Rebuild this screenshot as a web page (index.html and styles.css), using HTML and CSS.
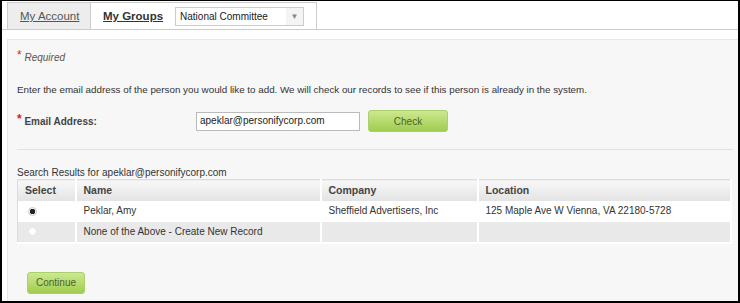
FILE: index.html
```html
<!DOCTYPE html>
<html>
<head>
<meta charset="utf-8">
<link rel="stylesheet" href="styles.css">
</head>
<body>
<div class="frame">
  <div class="tabs">
    <div class="tab tab-off"><a class="tab-link">My Account</a></div>
    <div class="tab tab-on">
      <a class="tab-link tab-link-on">My Groups</a>
      <div class="select"><span class="select-text">National Committee</span><span class="select-arrow">&#9660;</span></div>
    </div>
  </div>
  <div class="panel">
    <div class="required"><span class="star">*</span> Required</div>
    <p class="intro">Enter the email address of the person you would like to add. We will check our records to see if this person is already in the system.</p>
    <div class="email-row">
      <label class="email-label"><span class="star">*</span> Email Address:</label>
      <div class="input">apeklar@personifycorp.com</div>
      <button class="btn btn-check">Check</button>
    </div>
    <div class="sep"></div>
    <div class="results-title">Search Results for apeklar@personifycorp.com</div>
    <table class="results">
      <thead>
        <tr><th class="c-sel">Select</th><th class="c-name">Name</th><th class="c-comp">Company</th><th class="c-loc">Location</th></tr>
      </thead>
      <tbody>
        <tr class="row-a"><td class="c-sel"><span class="radio radio-on"></span></td><td>Peklar, Amy</td><td>Sheffield Advertisers, Inc</td><td>125 Maple Ave W Vienna, VA 22180-5728</td></tr>
        <tr class="row-b"><td class="c-sel"><span class="radio"></span></td><td>None of the Above - Create New Record</td><td></td><td></td></tr>
      </tbody>
    </table>
    <button class="btn btn-continue">Continue</button>
  </div>
</div>
</body>
</html>
```
FILE: styles.css
```css
html, body {
  margin: 0;
  padding: 0;
  background: #fff;
}
body {
  font-family: "Liberation Sans", Arial, sans-serif;
  color: #333;
  font-size: 10px;
}
.frame {
  width: 740px;
  height: 303px;
  box-sizing: border-box;
  border-top: 1px solid #000;
  border-left: 2px solid #000;
  border-right: 2px solid #000;
  border-bottom: 2px solid #000;
  display: flex;
  flex-direction: column;
  overflow: hidden;
}
.tabs {
  display: flex;
  padding: 1px 0 0 5px;
  border-bottom: 1px solid #ccc;
  height: 27px;
}
.tab {
  display: flex;
  align-items: center;
  box-sizing: border-box;
  border: 1px solid #ccc;
  border-bottom: none;
  padding-left: 12px;
  font-size: 11.5px;
}
.tab-off {
  width: 84px;
  background: #ededed;
}
.tab-on {
  width: 226px;
  background: #fff;
  border-left: none;
  gap: 12px;
}
.tab-link {
  color: #555;
  text-decoration: underline;
}
.tab-link-on {
  color: #333;
  font-weight: bold;
}
.select {
  width: 129px;
  height: 19px;
  box-sizing: border-box;
  border: 1px solid #ccc;
  display: flex;
  align-items: center;
  justify-content: space-between;
  font-size: 10px;
  color: #222;
  padding-left: 4px;
}
.select-arrow {
  width: 17px;
  height: 17px;
  display: flex;
  align-items: center;
  justify-content: center;
  font-size: 8px;
  color: #888;
  background: #f4f4f4;
}
.panel {
  flex: 1;
  margin: 9px 0 0 5px;
  background: #f7f7f7;
  border-top: 1px solid #e8e8e8;
  border-left: 1px solid #e8e8e8;
  padding: 11px 5px 0 9px;
  line-height: 12px;
}
.star {
  color: #d22;
  font-size: 12px;
  font-style: normal;
  position: relative;
  top: -2px;
}
.required {
  font-style: italic;
  color: #555;
}
.intro {
  margin: 20px 0 0 0;
  font-size: 9.8px;
}
.email-row {
  display: flex;
  align-items: center;
  margin-top: 14px;
  height: 22px;
}
.email-label {
  width: 179px;
  font-weight: bold;
  color: #444;
}
.input {
  width: 164px;
  height: 19px;
  box-sizing: border-box;
  border: 1px solid #bbb;
  background: #fff;
  color: #222;
  padding-left: 3px;
  display: flex;
  align-items: center;
  font-size: 10px;
}
.btn {
  font-family: "Liberation Sans", Arial, sans-serif;
  font-size: 10px;
  color: #4d6328;
  border: 1px solid #a9cf6f;
  border-radius: 3px;
  background: linear-gradient(#cde88f, #9fcd4f);
  padding: 0;
  height: 22px;
}
.btn-check {
  width: 80px;
  margin-left: 8px;
}
.sep {
  margin-top: 17px;
  border-top: 1px solid #e2e2e2;
}
.results-title {
  margin-top: 17px;
}
.results {
  margin-top: 0;
  width: 715px;
  table-layout: fixed;
  border-collapse: collapse;
  border: 1px solid #dcdcdc;
}
.results th, .results td {
  box-sizing: border-box;
  height: 21px;
  padding: 0 0 0 7px;
  text-align: left;
  border-right: 2px solid #fff;
  vertical-align: middle;
}
.results th {
  font-weight: bold;
  font-size: 10.5px;
  color: #444;
  background: linear-gradient(#f8f8f8, #e3e3e3);
}
.c-sel { width: 58px; }
.c-name { width: 245px; }
.c-comp { width: 157px; }
.results td.c-sel { padding-left: 10px; }
.row-a td { background: #fff; }
.row-b td {
  background: #e9e9e9;
  border-bottom: 2px solid #fff;
}
.radio {
  display: block;
  width: 9px;
  height: 9px;
  box-sizing: border-box;
  border-radius: 50%;
  border: 1px solid #e2e2e2;
  background: #fff;
}
.radio-on {
  background: radial-gradient(circle, #222 0 2.5px, #f2f2f2 3px);
  border-color: #ccc;
}
.btn-continue {
  display: block;
  width: 58px;
  margin: 28px 0 0 10px;
}
```
